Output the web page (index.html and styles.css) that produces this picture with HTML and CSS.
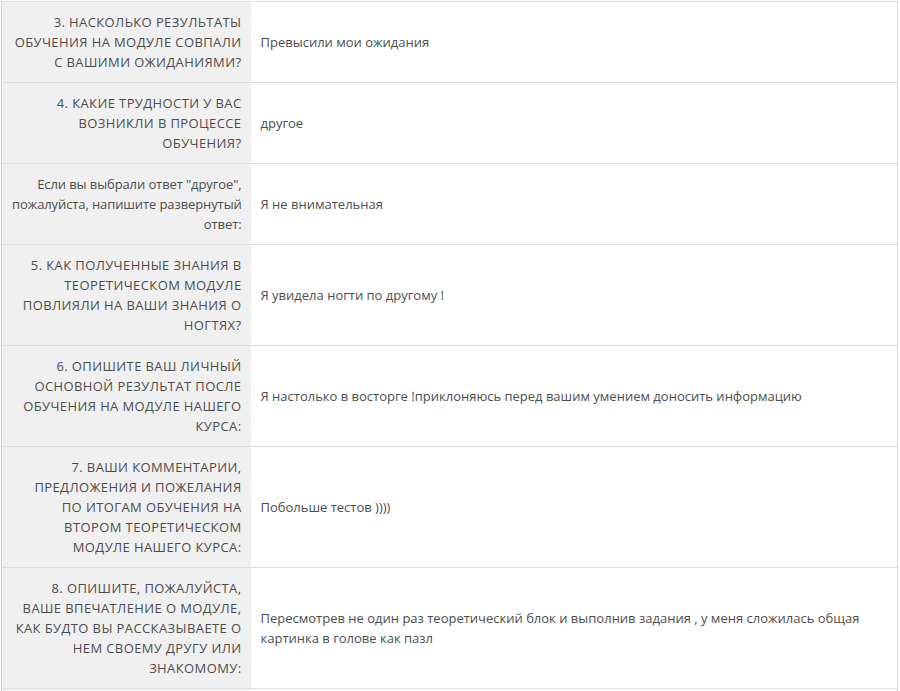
FILE: index.html
```html
<!DOCTYPE html>
<html lang="ru">
<head>
    <meta charset="UTF-8">
    <meta name="viewport" content="width=device-width, initial-scale=1.0">
    <title>Анкета по модулю</title>
    <link rel="stylesheet" href="styles.css">
</head>
<body>
    <!-- Ответы на анкету -->
    <table class="otvety">
        <colgroup>
            <col class="kol-vopros">
            <col>
        </colgroup>
        <tr>
            <th>3. НАСКОЛЬКО РЕЗУЛЬТАТЫ<br>ОБУЧЕНИЯ НА МОДУЛЕ СОВПАЛИ<br>С ВАШИМИ ОЖИДАНИЯМИ?</th>
            <td>Превысили мои ожидания</td>
        </tr>
        <tr>
            <th>4. КАКИЕ ТРУДНОСТИ У ВАС<br>ВОЗНИКЛИ В ПРОЦЕССЕ<br>ОБУЧЕНИЯ?</th>
            <td>другое</td>
        </tr>
        <tr>
            <th class="obychny">Если вы выбрали ответ "другое",<br>пожалуйста, напишите развернутый<br>ответ:</th>
            <td>Я не внимательная</td>
        </tr>
        <tr>
            <th>5. КАК ПОЛУЧЕННЫЕ ЗНАНИЯ В<br>ТЕОРЕТИЧЕСКОМ МОДУЛЕ<br>ПОВЛИЯЛИ НА ВАШИ ЗНАНИЯ О<br>НОГТЯХ?</th>
            <td>Я увидела ногти по другому !</td>
        </tr>
        <tr>
            <th>6. ОПИШИТЕ ВАШ ЛИЧНЫЙ<br>ОСНОВНОЙ РЕЗУЛЬТАТ ПОСЛЕ<br>ОБУЧЕНИЯ НА МОДУЛЕ НАШЕГО<br>КУРСА:</th>
            <td>Я настолько в восторге !приклоняюсь перед вашим умением доносить информацию</td>
        </tr>
        <tr>
            <th>7. ВАШИ КОММЕНТАРИИ,<br>ПРЕДЛОЖЕНИЯ И ПОЖЕЛАНИЯ<br>ПО ИТОГАМ ОБУЧЕНИЯ НА<br>ВТОРОМ ТЕОРЕТИЧЕСКОМ<br>МОДУЛЕ НАШЕГО КУРСА:</th>
            <td>Побольше тестов ))))</td>
        </tr>
        <tr>
            <th>8. ОПИШИТЕ, ПОЖАЛУЙСТА,<br>ВАШЕ ВПЕЧАТЛЕНИЕ О МОДУЛЕ,<br>КАК БУДТО ВЫ РАССКАЗЫВАЕТЕ О<br>НЕМ СВОЕМУ ДРУГУ ИЛИ<br>ЗНАКОМОМУ:</th>
            <td>Пересмотрев не один раз теоретический блок и выполнив задания , у меня сложилась общая картинка в голове как пазл</td>
        </tr>
        <tr>
            <th>9. ОЦЕНИТЕ МОДУЛЬ ПО<br>ШКАЛЕ ОТ 1 ДО 10:</th>
            <td>10</td>
        </tr>
    </table>
</body>
</html>
```

FILE: styles.css
```css
/* Общий стиль */
body {
    margin: 1px 0 0 1px;
    background-color: #fff;
    font-family: "Open Sans", Arial, sans-serif;
    font-size: 13px;
    color: #4d4d4d;
}

/* Таблица ответов */
.otvety {
    width: 897px;
    table-layout: fixed;
    border-collapse: collapse;
    border: 1px solid #ddd;
    border-left-color: #ccc;
}

.kol-vopros {
    width: 249px;
}

.otvety tr {
    border-bottom: 1px solid #ddd;
}

.otvety th,
.otvety td {
    padding: 10px 10px;
    line-height: 20px;
    vertical-align: middle;
}

/* Вопросы слева */
.otvety th {
    background-color: #f0f0f0;
    text-align: right;
    font-weight: normal;
    padding-right: 9px;
    white-space: nowrap;
    letter-spacing: 0.4px;
}

.otvety th.obychny {
    letter-spacing: -0.1px;
}

/* Ответы справа */
.otvety td {
    text-align: left;
    padding-right: 30px;
}
```
